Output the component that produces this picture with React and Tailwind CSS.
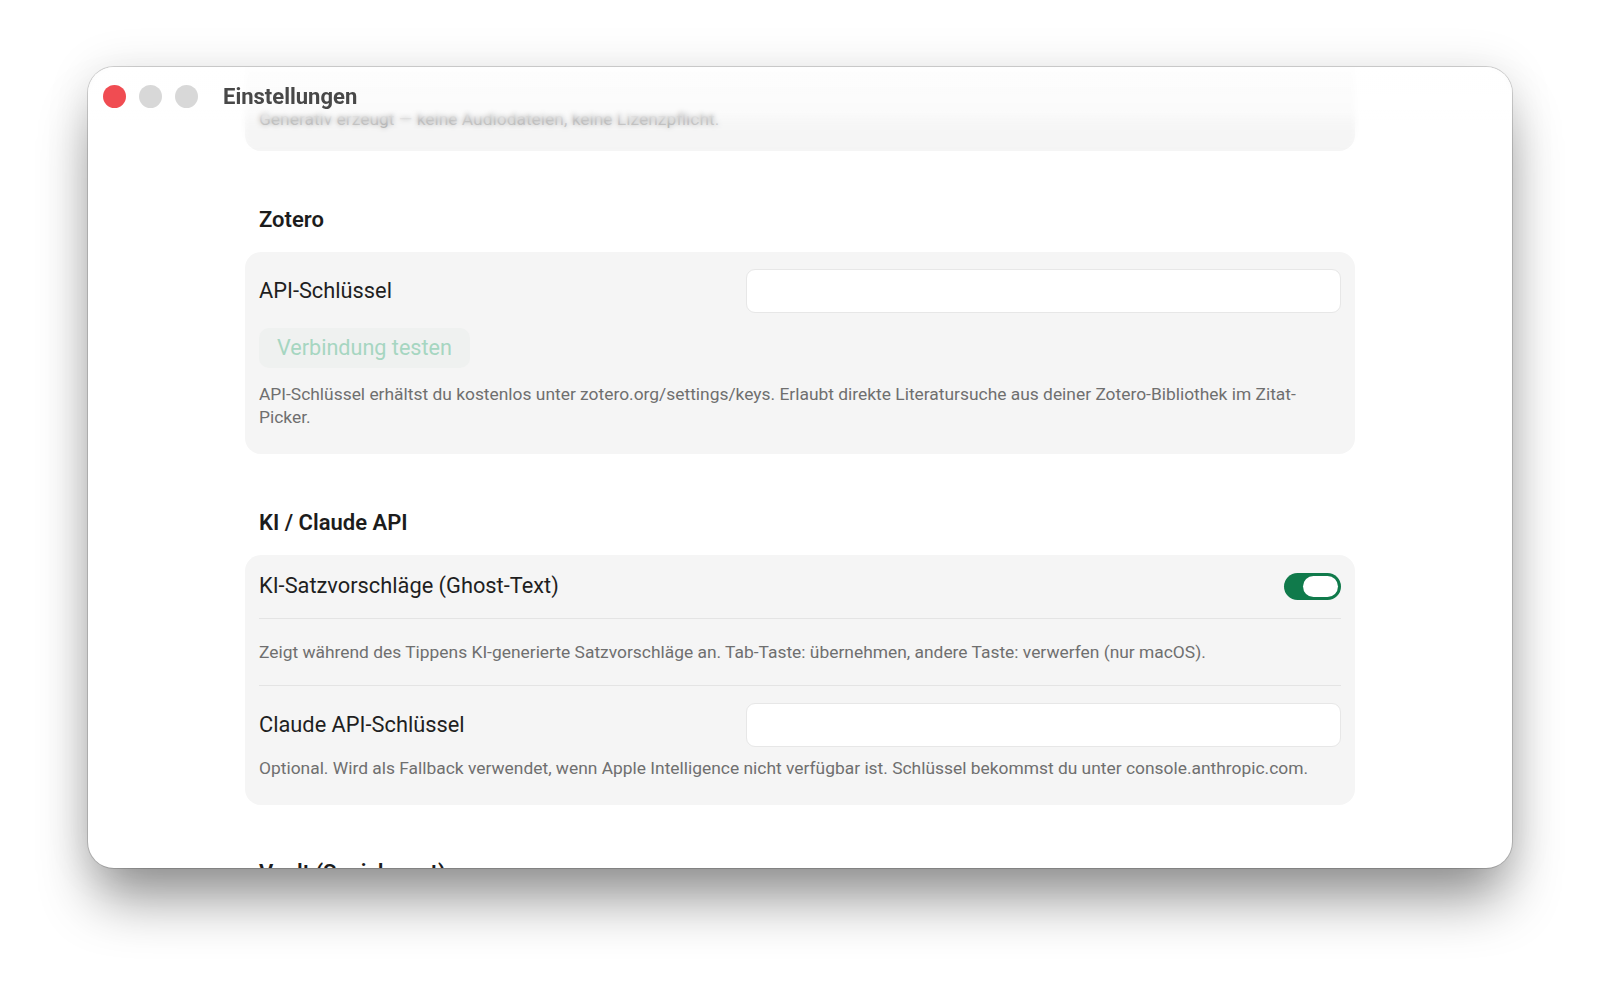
import React from "react";

const font = { fontFamily: "Roboto, 'Noto Sans', 'Liberation Sans', sans-serif" };

function Heading({ children, className = "" }) {
  return (
    <h2 className={`pl-[14px] text-[22px] leading-[28px] font-semibold text-[#1c1c1c] ${className}`}>
      {children}
    </h2>
  );
}

function Card({ children, className = "" }) {
  return <div className={`rounded-[16px] bg-[#f5f5f5] px-[14px] ${className}`}>{children}</div>;
}

function Label({ children }) {
  return <span className="text-[21.8px] text-[#1f1f1f]">{children}</span>;
}

function TextField() {
  return (
    <div className="h-[44px] w-[595px] rounded-[9px] border border-[#e7e7e7] bg-white" />
  );
}

function Toggle() {
  return (
    <div className="flex h-[27px] w-[57px] items-center justify-end rounded-full bg-[#107a4b] pr-[3px]">
      <div className="h-[21px] w-[35px] rounded-full bg-white" />
    </div>
  );
}

function Note({ children, className = "" }) {
  return <p className={`text-[17.4px] leading-[23px] text-[#6f6f6f] ${className}`}>{children}</p>;
}

export default function App() {
  return (
    <div className="min-h-[1000px] w-[1600px] bg-white pl-[88px] pt-[67px]" style={font}>
      <div className="relative h-[801px] w-[1424px] overflow-hidden rounded-[26px] bg-white shadow-[0_0_0_1px_rgba(0,0,0,0.16),0_38px_55px_-8px_rgba(0,0,0,0.42),0_0_45px_rgba(0,0,0,0.10)]">
        {/* scrolled settings content */}
        <div className="-mt-[39px] flex flex-col items-center">
          <div className="w-[1110px]">
            <Card className="pt-[80px] pb-[20px]">
              <Note>Generativ erzeugt — keine Audiodateien, keine Lizenzpflicht.</Note>
            </Card>

            <Heading className="mt-[55px] mb-[18px]">Zotero</Heading>
            <Card className="pt-[17px] pb-[25px]">
              <div className="flex h-[44px] items-center justify-between">
                <Label>API-Schlüssel</Label>
                <TextField />
              </div>
              <button className="mt-[15px] flex h-[40px] items-center rounded-[10px] bg-[#eff1f0] px-[18px] text-[21.6px] text-[#a6d6c1]">
                Verbindung testen
              </button>
              <Note className="mt-[15px] pr-[30px]">
                API-Schlüssel erhältst du kostenlos unter zotero.org/settings/keys. Erlaubt direkte
                Literatursuche aus deiner Zotero-Bibliothek im Zitat-Picker.
              </Note>
            </Card>

            <Heading className="mt-[55px] mb-[18px]">KI / Claude API</Heading>
            <Card className="pb-[25px]">
              <div className="flex h-[64px] items-center justify-between border-b border-[#e4e4e4]">
                <Label>KI-Satzvorschläge (Ghost-Text)</Label>
                <Toggle />
              </div>
              <div className="flex h-[67px] items-center border-b border-[#e4e4e4]">
                <Note>
                  Zeigt während des Tippens KI-generierte Satzvorschläge an. Tab-Taste: übernehmen,
                  andere Taste: verwerfen (nur macOS).
                </Note>
              </div>
              <div className="mt-[17px] flex h-[44px] items-center justify-between">
                <Label>Claude API-Schlüssel</Label>
                <TextField />
              </div>
              <Note className="mt-[10px]">
                Optional. Wird als Fallback verwendet, wenn Apple Intelligence nicht verfügbar ist.
                Schlüssel bekommst du unter console.anthropic.com.
              </Note>
            </Card>

            <Heading className="mt-[54px]">Vault (Speicherort)</Heading>
            <Card className="mt-[18px] h-[120px]" />
          </div>
        </div>

        {/* translucent title bar over the scrolled content */}
        <div className="absolute inset-x-0 top-0 h-[84px] bg-gradient-to-b from-white/85 via-white/60 to-white/0 backdrop-blur-[2.5px] [mask-image:linear-gradient(to_bottom,black_55%,transparent)]" />
        <div className="absolute inset-x-0 top-0 flex h-[58px] items-center pl-[15px]">
          <div className="flex items-center gap-[13px]">
            <span className="h-[23px] w-[23px] rounded-full bg-[#f04c52]" />
            <span className="h-[23px] w-[23px] rounded-full bg-[#d8d8d8]" />
            <span className="h-[23px] w-[23px] rounded-full bg-[#d8d8d8]" />
          </div>
          <span className="ml-[25px] text-[22px] font-bold text-[#484848]">Einstellungen</span>
        </div>
      </div>
    </div>
  );
}
